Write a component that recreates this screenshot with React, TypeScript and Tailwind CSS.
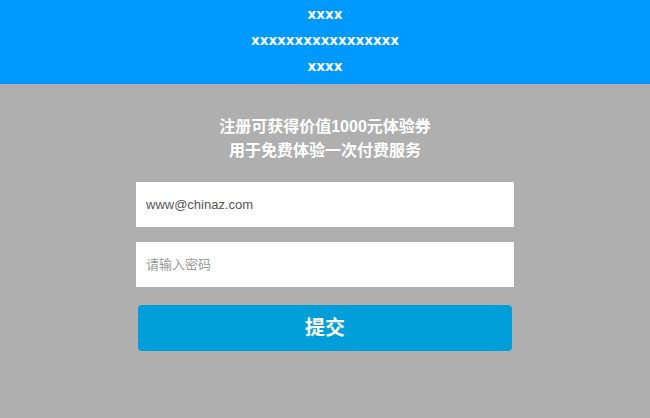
import { useState } from "react";

export default function App() {
  const [email, setEmail] = useState("www@chinaz.com");
  const [pwd, setPwd] = useState("");

  return (
    <div
      className="min-h-[418px] bg-[#afafaf]"
      style={{ fontFamily: '"Liberation Sans", Arial, "Noto Sans CJK SC", sans-serif' }}
    >
      <header
        className="flex h-[84px] flex-col items-center bg-[#0099ff] pt-[1px] text-[13.5px] font-bold leading-[26px] text-white"
        style={{ fontFamily: '"DejaVu Sans", Verdana, sans-serif' }}
      >
        <p>xxxx</p>
        <p>xxxxxxxxxxxxxxxxx</p>
        <p>xxxx</p>
      </header>

      <form className="mx-auto flex w-[378px] flex-col items-center pt-[31px]" onSubmit={(e) => e.preventDefault()}>
        <h2 className="text-center text-[16px] font-bold leading-[24px] text-white">
          注册可获得价值1000元体验券
          <br />
          用于免费体验一次付费服务
        </h2>
        <input
          className="mt-[19px] h-[45px] w-full bg-white px-[10px] text-[13px] text-[#555] outline-none"
          value={email}
          onChange={(e) => setEmail(e.target.value)}
        />
        <input
          type="password"
          autoFocus
          placeholder="请输入密码"
          className="mt-[15px] h-[45px] w-full bg-white px-[10px] text-[13px] text-[#555] outline-none placeholder:text-[#999]"
          value={pwd}
          onChange={(e) => setPwd(e.target.value)}
        />
        <button className="mt-[18px] h-[46px] w-[374px] rounded-[4px] bg-[#009fd9] text-[20px] font-bold text-white">
          提交
        </button>
      </form>
    </div>
  );
}
